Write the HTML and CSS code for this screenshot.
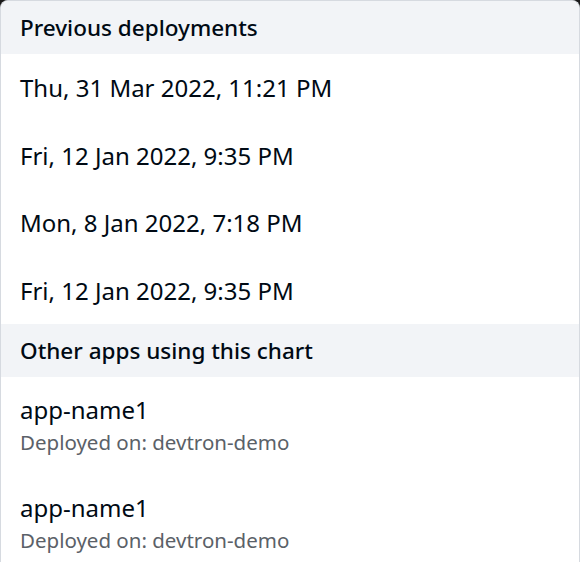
FILE: index.html
```html
<!DOCTYPE html>
<html lang="en">
<head>
  <meta charset="UTF-8">
  <title>Deployment history</title>
  <link rel="stylesheet" href="styles.css">
</head>
<body>
  <div class="card">
    <div class="section-title">Previous deployments</div>
    <div class="deploy-row">Thu, 31 Mar 2022, 11:21 PM</div>
    <div class="deploy-row">Fri, 12 Jan 2022, 9:35 PM</div>
    <div class="deploy-row">Mon, 8 Jan 2022, 7:18 PM</div>
    <div class="deploy-row">Fri, 12 Jan 2022, 9:35 PM</div>

    <div class="section-title">Other apps using this chart</div>
    <div class="app-row">
      <div class="app-name">app-name1</div>
      <div class="app-env">Deployed on: devtron-demo</div>
    </div>
    <div class="app-row">
      <div class="app-name">app-name1</div>
      <div class="app-env">Deployed on: devtron-demo</div>
    </div>
  </div>
</body>
</html>
```

FILE: styles.css
```css
body {
  margin: 0;
  background: #1a1a1a;
  font-family: "Noto Sans", "Open Sans", sans-serif;
  color: #000a14;
}

.card {
  background: #fff;
  border: 1px solid #d6dae0;
  border-bottom: none;
  border-radius: 8px 8px 0 0;
  height: 561px;
  overflow: hidden;
}

.section-title {
  background: #f2f4f7;
  height: 53px;
  line-height: 53px;
  padding: 0 19px;
  font-size: 22.5px;
  font-weight: 500;
}

.deploy-row {
  height: 67.5px;
  line-height: 67.5px;
  padding: 0 19px;
  font-size: 24px;
}

.app-row {
  padding: 16px 19px 18px;
}

.app-name {
  font-size: 24px;
  line-height: 34px;
}

.app-env {
  font-size: 20.5px;
  line-height: 30px;
  color: #5b6168;
}
```
